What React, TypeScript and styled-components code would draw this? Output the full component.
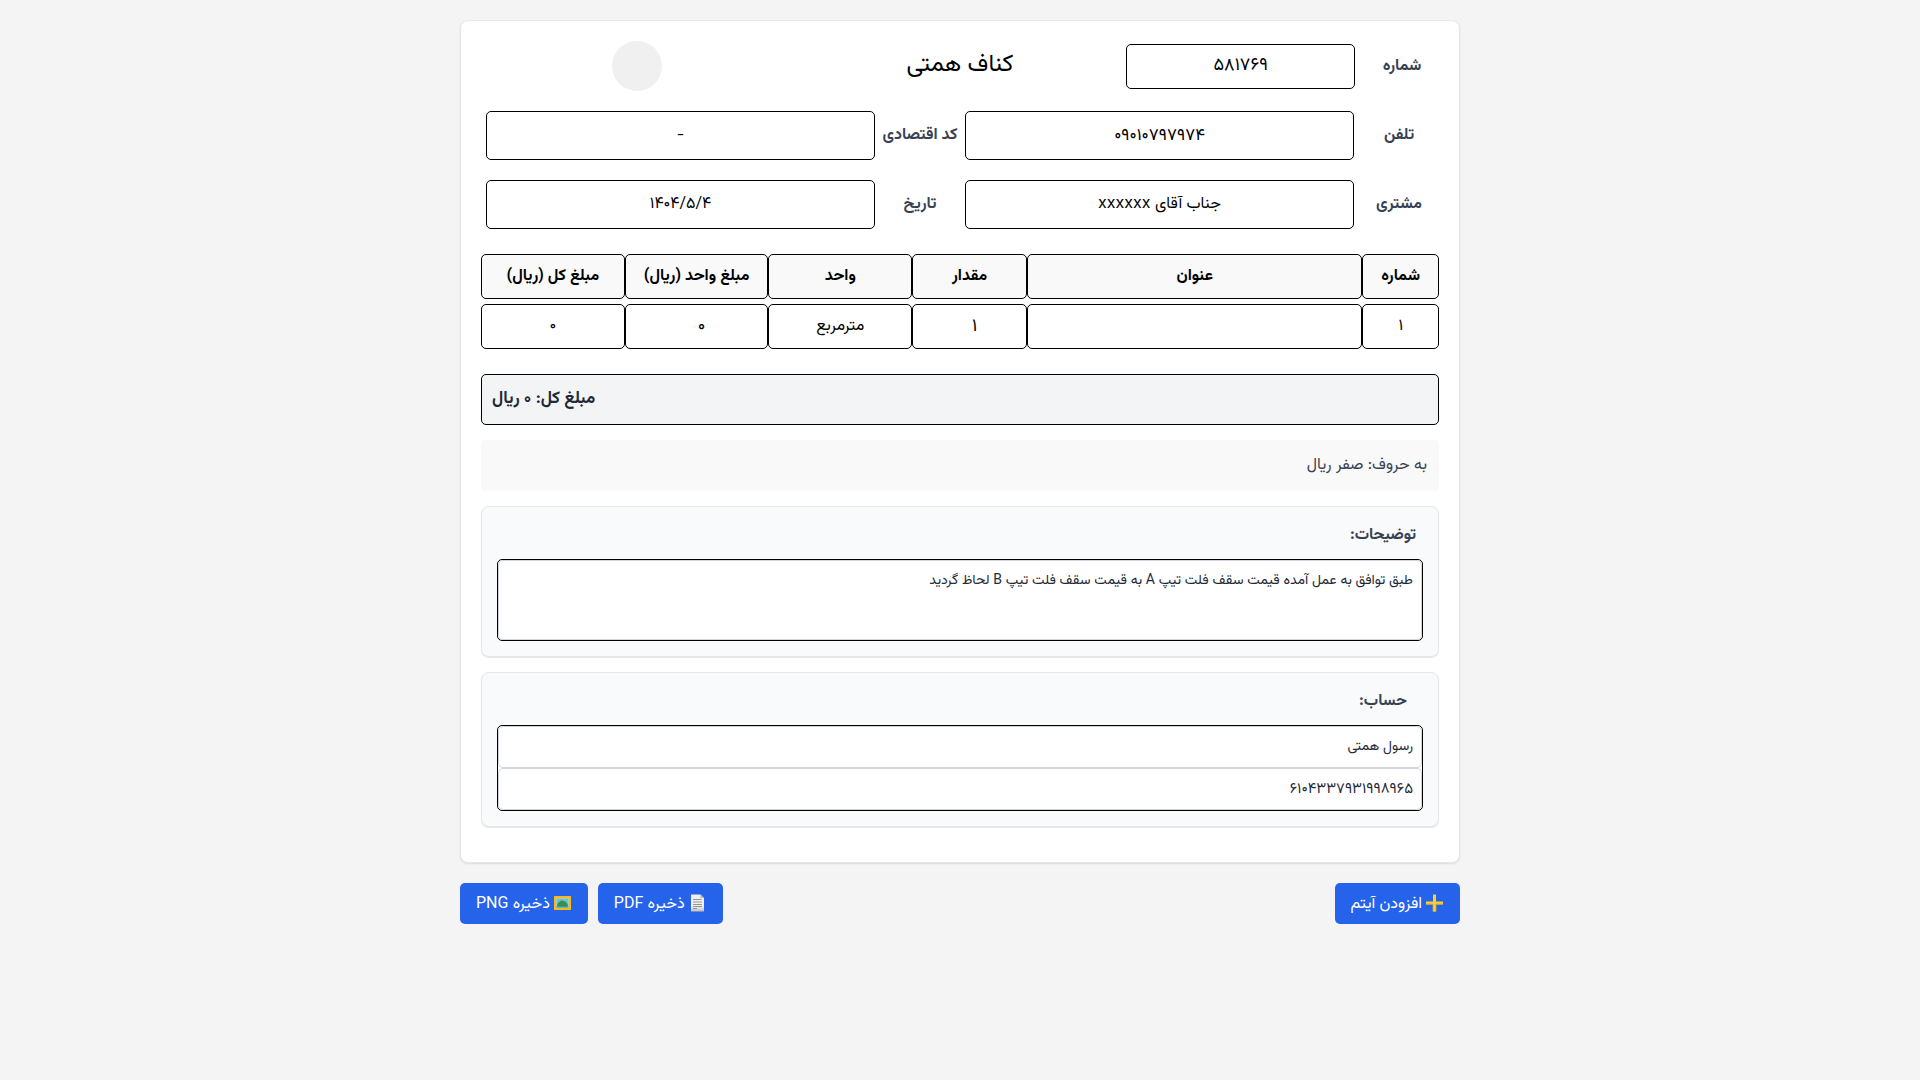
import React from "react";
import styled, { createGlobalStyle, css } from "styled-components";

const GlobalStyle = createGlobalStyle`
  *, *::before, *::after { box-sizing: border-box; }
  body {
    margin: 0;
    background: #f4f4f4;
  }
  body, input, textarea, button {
    font-family: Vazirmatn, Roboto, "Noto Sans Arabic", "DejaVu Sans", sans-serif;
  }
`;

const Page = styled.main`
  max-width: 1000px;
  margin: 20px auto;
`;

const Sheet = styled.article`
  padding: 20px 20px 35px;
  background: #fff;
  border: 1px solid #e5e7eb;
  border-radius: 8px;
  box-shadow: 0 1px 2px rgba(0, 0, 0, 0.1);
`;

const Header = styled.header`
  display: grid;
  grid-template-columns: repeat(3, minmax(0, 1fr));
  gap: 10px;
  align-items: center;
  margin-bottom: 15px;
`;

const NumberField = styled.div`
  display: flex;
  align-items: center;
  gap: 10px;
`;

const Label = styled.label<{ $width?: number }>`
  flex: none;
  display: block;
  width: ${(p) => p.$width ?? 80}px;
  font-size: 16px;
  line-height: 27px;
  font-weight: 700;
  color: #374151;
  text-align: center;
  white-space: nowrap;
`;

const boxed = css`
  border: 1px solid #000;
  border-radius: 5px;
  background: #fff;
`;

const Field = styled.input<{ $height: number; $size?: number; $latin?: boolean }>`
  ${boxed}
  flex: 1;
  min-width: 0;
  height: ${(p) => p.$height}px;
  padding: 0 10px;
  font-size: ${(p) => p.$size ?? 16}px;
  ${(p) => p.$latin && css`font-family: Inter, Vazirmatn, "DejaVu Sans", sans-serif;`}
  color: #000;
  text-align: center;
  outline: none;
`;

const Title = styled.h1`
  margin: 0;
  padding-bottom: 2px;
  font-size: 24px;
  line-height: 40px;
  font-weight: 400;
  color: #000;
  text-align: center;
`;

const Logo = styled.div`
  width: 50px;
  height: 50px;
  border-radius: 50%;
  background: #f0f0f0;
  justify-self: center;
`;

const Details = styled.div`
  display: grid;
  grid-template-columns: 80px 1fr 80px 1fr;
  row-gap: 10px;
  align-items: center;

  ${Field} {
    margin: 5px;
  }
`;

const Items = styled.table`
  width: 100%;
  margin: 15px 0 20px;
  table-layout: fixed;
  border-collapse: separate;
  border-spacing: 0 5px;
`;

const HeadCell = styled.th<{ $share: number }>`
  ${boxed}
  width: ${(p) => p.$share}%;
  height: 45px;
  padding: 0;
  background: #f9f9f9;
  font-size: 16px;
  font-weight: 700;
  white-space: nowrap;
`;

const Cell = styled.td`
  ${boxed}
  height: 45px;
  padding: 0;
  font-size: 16px;
  text-align: center;
`;

const CellInput = styled.input<{ $numeric?: boolean }>`
  display: block;
  width: 100%;
  height: 43px;
  border: 0;
  padding: ${(p) => (p.$numeric ? "0 0 0 10px" : "0")};
  background: transparent;
  font-size: ${(p) => (p.$numeric ? 18 : 16)}px;
  text-align: center;
  outline: none;
`;

const Total = styled.div`
  ${boxed}
  padding: 9px 10px;
  background: #f3f4f6;
  font-size: 17px;
  line-height: 31px;
  font-weight: 700;
  color: #1f2937;
  text-align: left;
`;

const InWords = styled.div`
  margin: 15px 0;
  padding: 10px 12px;
  border-radius: 5px;
  background: #f9f9f9;
  font-size: 16px;
  line-height: 31px;
  color: #374151;
`;

const Section = styled.section`
  padding: 15px;
  border: 1px solid #e5e7eb;
  border-radius: 8px;
  background: #f9fafb;
  box-shadow: 0 1px 1px rgba(0, 0, 0, 0.1);

  & + & {
    margin-top: 15px;
  }
`;

const Frame = styled.div`
  ${boxed}
  margin-top: 10px;
`;

const entry = css<{ $size?: number }>`
  display: block;
  width: 100%;
  border: 1px solid #d1d5db;
  border-radius: 5px;
  background: #fff;
  font-size: ${(p) => p.$size ?? 14}px;
  color: #1f2937;
  outline: none;
`;

const Note = styled.textarea<{ $size?: number }>`
  ${entry}
  height: 80px;
  padding: 8px;
  line-height: 24px;
  resize: none;
`;

const Entry = styled.input<{ $size?: number }>`
  ${entry}
  height: 42px;
  padding: 0 8px;
`;

const Actions = styled.div`
  display: flex;
  flex-wrap: wrap;
  justify-content: space-between;
  gap: 10px;
  margin-top: 20px;
`;

const Group = styled.div`
  display: flex;
  gap: 10px;
`;

const Button = styled.button`
  display: flex;
  align-items: center;
  justify-content: center;
  gap: 3px;
  height: 41px;
  padding: 1px 16px 0;
  border: 0;
  border-radius: 5px;
  background: #2563eb;
  color: #fff;
  font-size: 16px;
  cursor: pointer;

  svg {
    flex: none;
    margin-bottom: 3px;
  }
`;

const PlusIcon = () => (
  <svg width="19" height="18" viewBox="0 0 19 18" aria-hidden="true">
    <path d="M8 0.500h3v7h7v3h-7v7H8v-7H1v-3h7z" fill="#fdd02a" />
    <path d="M1 10h7v7.500h3V10h7" fill="none" stroke="#e0a92c" strokeWidth="0.700" />
  </svg>
);

const PageIcon = () => (
  <svg width="19" height="18" viewBox="0 0 19 18" aria-hidden="true">
    <defs>
      <linearGradient id="paper" x1="0" y1="0" x2="0" y2="1">
        <stop offset="0.700" stopColor="#f0f0f0" />
        <stop offset="1" stopColor="#bdbdbd" />
      </linearGradient>
    </defs>
    <path d="M3 0.500h9.500l3.500 3.500V17.500H3z" fill="url(#paper)" />
    <path d="M12.500 0.500v3.500h3.500z" fill="#b5b5b5" />
    <path d="M5 5.500h8.500M5 8h9M5 10.500h9M5 12.500h9M5 14.500h4" stroke="#8a8a8a" strokeWidth="0.900" />
  </svg>
);

const PictureIcon = () => (
  <svg width="19" height="18" viewBox="0 0 19 18" aria-hidden="true">
    <rect x="1" y="2" width="17" height="14" fill="#fbb811" />
    <rect x="3" y="4" width="13" height="10" fill="#f3d78b" />
    <rect x="3.500" y="4.500" width="12" height="9" fill="#5cc6e8" />
    <path d="M4 11.500c0-2 1.500-2.500 2.500-4 1.500-1.500 4-1.300 5.500 0 1.500 1 2.500 2 3 4l-1 1.500H5z" fill="#3f8f4a" />
    <path d="M3.500 12.500c3-.8 8-.8 12 0v1h-12z" fill="#2f9fb8" />
  </svg>
);

const columns: [string, number][] = [
  ["شماره", 8],
  ["عنوان", 35],
  ["مقدار", 12],
  ["واحد", 15],
  ["مبلغ واحد (ریال)", 15],
  ["مبلغ کل (ریال)", 15],
];

export default function App() {
  return (
    <Page dir="rtl" lang="fa">
      <GlobalStyle />
      <Sheet>
        <Header>
          <NumberField>
            <Label htmlFor="number" $width={74}>شماره</Label>
            <Field id="number" $height={45} $size={18} defaultValue="۵۸۱۷۶۹" />
          </NumberField>
          <Title>کناف همتی</Title>
          <Logo />
        </Header>
        <Details>
          <Label htmlFor="phone">تلفن</Label>
          <Field id="phone" $height={49} $size={17} defaultValue="۰۹۰۱۰۷۹۷۹۷۴" />
          <Label htmlFor="code">کد اقتصادی</Label>
          <Field id="code" $height={49} defaultValue="-" />
          <Label htmlFor="customer">مشتری</Label>
          <Field id="customer" $height={49} $latin defaultValue="جناب آقای xxxxxx" />
          <Label htmlFor="date">تاریخ</Label>
          <Field id="date" $height={49} defaultValue="۱۴۰۴/۵/۴" />
        </Details>
        <Items>
          <thead>
            <tr>
              {columns.map(([name, share]) => (
                <HeadCell key={name} $share={share} scope="col">{name}</HeadCell>
              ))}
            </tr>
          </thead>
          <tbody>
            <tr>
              <Cell>۱</Cell>
              <Cell><CellInput aria-label="عنوان" /></Cell>
              <Cell><CellInput $numeric inputMode="numeric" aria-label="مقدار" defaultValue="۱" /></Cell>
              <Cell><CellInput aria-label="واحد" defaultValue="مترمربع" /></Cell>
              <Cell><CellInput $numeric inputMode="numeric" aria-label="مبلغ واحد" defaultValue="۰" /></Cell>
              <Cell>۰</Cell>
            </tr>
          </tbody>
        </Items>
        <Total>مبلغ کل: ۰ ریال</Total>
        <InWords>به حروف: صفر ریال</InWords>
        <Section>
          <Label htmlFor="note">توضیحات:</Label>
          <Frame>
            <Note
              id="note"
              defaultValue="طبق توافق به عمل آمده قیمت سقف فلت تیپ A به قیمت سقف فلت تیپ B لحاظ گردید"
            />
          </Frame>
        </Section>
        <Section>
          <Label htmlFor="holder">حساب:</Label>
          <Frame>
            <Entry id="holder" defaultValue="رسول همتی" />
            <Entry $size={15} aria-label="شماره کارت" defaultValue="۶۱۰۴۳۳۷۹۳۱۹۹۸۹۶۵" />
          </Frame>
        </Section>
      </Sheet>
      <Actions>
        <Button type="button"><PlusIcon />افزودن آیتم</Button>
        <Group>
          <Button type="button"><PageIcon />ذخیره PDF</Button>
          <Button type="button"><PictureIcon />ذخیره PNG</Button>
        </Group>
      </Actions>
    </Page>
  );
}
